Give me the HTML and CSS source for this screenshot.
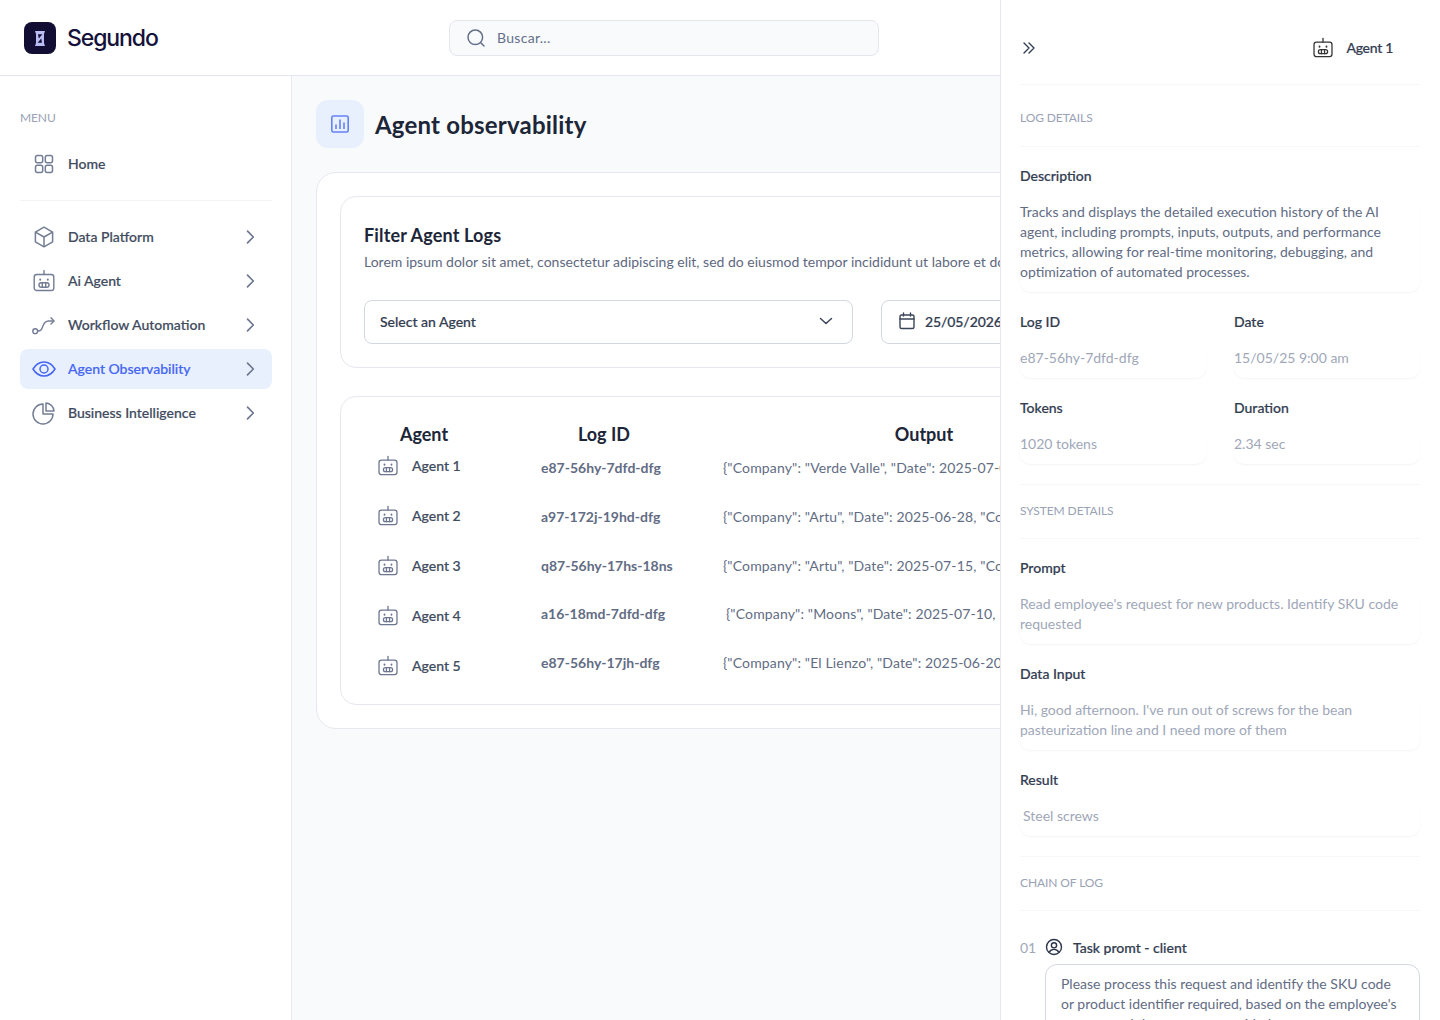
FILE: index.html
```html
<!DOCTYPE html>
<html lang="en">
<head>
<meta charset="utf-8">
<title>Segundo - Agent observability</title>
<link rel="stylesheet" href="styles.css">
</head>
<body>
<svg class="defs" width="0" height="0">
  <symbol id="robot" viewBox="0 0 24 24" fill="none" stroke="currentColor" stroke-width="1.4" stroke-linecap="round" stroke-linejoin="round">
    <rect x="2.2" y="5.5" width="19.6" height="16" rx="2.6"/>
    <path d="M12 5.5V1.6"/>
    <rect x="7" y="13.8" width="10" height="4.4" rx="2.2"/>
    <path d="M10.3 13.8v4.4M13.7 13.8v4.4"/>
    <path d="M8.2 10.4v.3M15.8 10.4v.3" stroke-width="2"/>
  </symbol>
  <symbol id="chev" viewBox="0 0 24 24" fill="none" stroke="currentColor" stroke-width="2" stroke-linecap="round" stroke-linejoin="round">
    <path d="M9 5l7 7-7 7"/>
  </symbol>
</svg>

<div class="app">
  <div class="left">
    <header class="topbar">
      <div class="brand">
        <span class="logo">
          <svg width="12" height="15" viewBox="0 0 12 15">
            <path d="M1 0h10l-1 3v9l1 3H1l1-3V3z" fill="#b9bdf3"/>
            <path d="M4 3.2h4.4L4.800 7.500zM8 11.800H3.600L7.200 7.500z" fill="#120e33"/>
          </svg>
        </span>
        <span class="brand-name">Segundo</span>
      </div>
      <div class="search">
        <svg width="20" height="20" viewBox="0 0 20 20" fill="none" stroke="#64708a" stroke-width="1.5" stroke-linecap="round"><circle cx="9.3" cy="9.3" r="7.3"/><path d="M15 15l3 3"/></svg>
        <span>Buscar...</span>
      </div>
    </header>

    <div class="body">
      <nav class="sidebar">
        <div class="menu-label">MENU</div>
        <a class="nav-item first">
          <svg class="nav-icon" viewBox="0 0 24 24" fill="none" stroke="currentColor" stroke-width="1.5"><rect x="3.5" y="3.5" width="7.2" height="7.2" rx="2"/><rect x="13.3" y="3.5" width="7.2" height="7.2" rx="2"/><rect x="3.5" y="13.3" width="7.2" height="7.2" rx="2"/><rect x="13.3" y="13.3" width="7.2" height="7.2" rx="2"/></svg>
          <span>Home</span>
        </a>
        <div class="nav-rule"></div>
        <a class="nav-item">
          <svg class="nav-icon" viewBox="0 0 24 24" fill="none" stroke="currentColor" stroke-width="1.5" stroke-linejoin="round"><path d="M12 2.2l8.6 4.9v9.8L12 21.8l-8.6-4.9V7.1z"/><path d="M3.4 7.1L12 12l8.6-4.9M12 12v9.8"/></svg>
          <span>Data Platform</span>
          <svg class="chev"><use href="#chev"/></svg>
        </a>
        <a class="nav-item">
          <svg class="nav-icon"><use href="#robot"/></svg>
          <span>Ai Agent</span>
          <svg class="chev"><use href="#chev"/></svg>
        </a>
        <a class="nav-item">
          <svg class="nav-icon" viewBox="0 0 24 24" fill="none" stroke="currentColor" stroke-width="1.4" stroke-linecap="round" stroke-linejoin="round"><circle cx="3.2" cy="18.2" r="2.4"/><path d="M5.6 18c3.5 0 4-1.2 5-4.2 1-3 3-5.800 6-5.800h5"/><path d="M19 4.800l3 3.200-3 3"/></svg>
          <span>Workflow Automation</span>
          <svg class="chev"><use href="#chev"/></svg>
        </a>
        <a class="nav-item active">
          <svg class="nav-icon" viewBox="0 0 24 24" fill="none" stroke="currentColor" stroke-width="1.5"><path d="M1 12c2.8-4.600 6.400-7 11-7s8.200 2.400 11 7c-2.800 4.600-6.400 7-11 7s-8.200-2.400-11-7z"/><circle cx="12" cy="12" r="4"/></svg>
          <span>Agent Observability</span>
          <svg class="chev"><use href="#chev"/></svg>
        </a>
        <a class="nav-item">
          <svg class="nav-icon" viewBox="0 0 24 24" fill="none" stroke="currentColor" stroke-width="1.5" stroke-linejoin="round"><path d="M11 3a10 10 0 1 0 10 10H11z"/><path d="M14 2a8.500 8.500 0 0 1 8 8h-8z"/></svg>
          <span>Business Intelligence</span>
          <svg class="chev"><use href="#chev"/></svg>
        </a>
      </nav>

      <main class="main">
        <div class="page-title">
          <span class="title-icon">
            <svg width="20" height="20" viewBox="0 0 20 20" fill="none" stroke="#6680f5" stroke-width="1.6"><rect x="1.8" y="2" width="16.4" height="16" rx="1.6"/><path d="M6 10.500V15M10 5.500V15M14 8.500V15"/></svg>
          </span>
          <h1>Agent observability</h1>
        </div>

        <section class="outer-card">
          <div class="filter-card">
            <h2>Filter Agent Logs</h2>
            <p class="filter-sub">Lorem ipsum dolor sit amet, consectetur adipiscing elit, sed do eiusmod tempor incididunt ut labore et dolore magna aliqua.</p>
            <div class="filter-row">
              <div class="select">
                <span>Select an Agent</span>
                <svg width="16" height="16" viewBox="0 0 16 16" fill="none" stroke="#3b4559" stroke-width="1.5" stroke-linecap="round" stroke-linejoin="round"><path d="M2.500 5.500L8 10.500l5.500-5"/></svg>
              </div>
              <div class="date">
                <svg width="18" height="18" viewBox="0 0 18 18" fill="none" stroke="#3b4559" stroke-width="1.4" stroke-linecap="round"><rect x="2" y="3" width="14" height="13.5" rx="1.5"/><path d="M2 7h14M5.500 1v3M12.500 1v3"/></svg>
                <span>25/05/2026</span>
              </div>
            </div>
          </div>

          <div class="table-card">
            <div class="col col-agent">
              <div class="col-head">Agent</div>
              <div class="agent-row"><svg class="robot"><use href="#robot"/></svg><span>Agent 1</span></div>
              <div class="agent-row"><svg class="robot"><use href="#robot"/></svg><span>Agent 2</span></div>
              <div class="agent-row"><svg class="robot"><use href="#robot"/></svg><span>Agent 3</span></div>
              <div class="agent-row"><svg class="robot"><use href="#robot"/></svg><span>Agent 4</span></div>
              <div class="agent-row"><svg class="robot"><use href="#robot"/></svg><span>Agent 5</span></div>
            </div>
            <div class="col col-log">
              <div class="col-head">Log ID</div>
              <div class="cell log-id">e87-56hy-7dfd-dfg</div>
              <div class="cell log-id">a97-172j-19hd-dfg</div>
              <div class="cell log-id">q87-56hy-17hs-18ns</div>
              <div class="cell log-id">a16-18md-7dfd-dfg</div>
              <div class="cell log-id">e87-56hy-17jh-dfg</div>
            </div>
            <div class="col col-output">
              <div class="col-head">Output</div>
              <div class="cell output">{"Company": "Verde Valle", "Date": 2025-07-02, "Cost": 1200}</div>
              <div class="cell output">{"Company": "Artu", "Date": 2025-06-28, "Cost": 870}</div>
              <div class="cell output">{"Company": "Artu", "Date": 2025-07-15, "Cost": 640}</div>
              <div class="cell output shifted">{"Company": "Moons", "Date": 2025-07-10, "Cost": 310}</div>
              <div class="cell output">{"Company": "El Lienzo", "Date": 2025-06-20, "Cost": 990}</div>
            </div>
          </div>
        </section>
      </main>
    </div>
  </div>

  <aside class="panel">
    <div class="panel-top">
      <svg class="collapse" width="14" height="14" viewBox="0 0 14 14" fill="none" stroke="#333d52" stroke-width="1.4" stroke-linecap="round" stroke-linejoin="round"><path d="M2 2l5 5-5 5M7 2l5 5-5 5"/></svg>
      <div class="panel-agent"><svg class="robot dark"><use href="#robot"/></svg><span>Agent 1</span></div>
    </div>
    <div class="sec-head first">LOG DETAILS</div>

    <div class="field">
      <div class="label">Description</div>
      <div class="value dark-value">Tracks and displays the detailed execution history of the AI agent, including prompts, inputs, outputs, and performance metrics, allowing for real-time monitoring, debugging, and optimization of automated processes.</div>
    </div>
    <div class="field-grid">
      <div class="field"><div class="label">Log ID</div><div class="value">e87-56hy-7dfd-dfg</div></div>
      <div class="field"><div class="label">Date</div><div class="value">15/05/25 9:00 am</div></div>
      <div class="field"><div class="label">Tokens</div><div class="value">1020 tokens</div></div>
      <div class="field"><div class="label">Duration</div><div class="value">2.34 sec</div></div>
    </div>

    <div class="sec-head">SYSTEM DETAILS</div>
    <div class="field">
      <div class="label">Prompt</div>
      <div class="value">Read employee's request for new products. Identify SKU code requested</div>
    </div>
    <div class="field">
      <div class="label">Data Input</div>
      <div class="value">Hi, good afternoon. I've run out of screws for the bean pasteurization line and I need more of them</div>
    </div>
    <div class="field">
      <div class="label">Result</div>
      <div class="value indent">Steel screws</div>
    </div>

    <div class="sec-head">CHAIN OF LOG</div>
    <div class="chain-head">
      <span class="chain-num">01</span>
      <svg width="18" height="18" viewBox="0 0 18 18" fill="none" stroke="#2b3448" stroke-width="1.4"><circle cx="9" cy="9" r="7.5"/><circle cx="9" cy="7.3" r="2.6"/><path d="M4.200 14.300c1-2 2.700-2.900 4.800-2.900s3.800.900 4.800 2.900"/></svg>
      <span class="chain-title">Task promt - client</span>
    </div>
    <div class="chain-box">Please process this request and identify the SKU code or product identifier required, based on the employee's request and the message provided.</div>
  </aside>
</div>
</body>
</html>
```

FILE: styles.css
```css
* {
	box-sizing: border-box;
}
html, body {
	margin: 0;
	height: 100%;
}
body {
	font-family: "Lato", "Liberation Sans", sans-serif;
	font-size: 14px;
	color: #333d52;
	background: #fff;
	overflow: hidden;
}
h1, h2, p {
	margin: 0;
}
.defs {
	position: absolute;
}
.app {
	display: flex;
	width: 1440px;
	height: 1020px;
	overflow: hidden;
}
.left {
	width: 1000px;
	flex: none;
	display: flex;
	flex-direction: column;
	overflow: hidden;
}

/* top bar */
.topbar {
	height: 76px;
	flex: none;
	display: flex;
	align-items: flex-start;
	border-bottom: 1px solid #e4e6ee;
	background: #fff;
}
.brand {
	width: 449px;
	flex: none;
	display: flex;
	align-items: center;
	gap: 11px;
	padding: 22px 0 0 24px;
}
.logo {
	width: 32px;
	height: 32px;
	border-radius: 8px;
	background: #120e33;
	display: flex;
	align-items: center;
	justify-content: center;
}
.brand-name {
	font-family: "Inter", sans-serif;
	font-size: 23px;
	font-weight: 500;
	letter-spacing: -1.1px;
	color: #14113a;
}
.search {
	width: 430px;
	height: 36px;
	margin-top: 20px;
	display: flex;
	align-items: center;
	gap: 11px;
	padding: 0 0 1px 16px;
	background: #f9fafc;
	border: 1px solid #e4e6ee;
	border-radius: 8px;
	color: #64708a;
	letter-spacing: .3px;
}
.body {
	flex: 1;
	display: flex;
	min-height: 0;
}

/* sidebar */
.sidebar {
	width: 292px;
	flex: none;
	padding: 34px 19px 0 20px;
	border-right: 1px solid #e8e9f1;
	background: #fff;
}
.menu-label {
	font-size: 12px;
	line-height: 16px;
	letter-spacing: -.1px;
	color: #9aa2b6;
	margin-bottom: 18px;
}
.nav-item {
	height: 40px;
	margin-bottom: 4px;
	display: flex;
	align-items: center;
	padding: 0 12px;
	border-radius: 8px;
	font-size: 14px;
	font-weight: 500;
	color: #414b60;
	-webkit-text-stroke: .2px;
}
.nav-item.first {
	margin-bottom: 16px;
}
.nav-item span {
	flex: 1;
	padding-bottom: 2px;
}
.nav-icon {
	width: 24px;
	height: 24px;
	margin-right: 12px;
	color: #737d94;
	flex: none;
}
.chev {
	width: 20px;
	height: 20px;
	color: #6c768e;
}
.nav-rule {
	height: 1px;
	background: #f2f3f6;
	margin-bottom: 16px;
}
.nav-item.active {
	background: #e9f0fd;
	color: #4565f3;
}
.nav-item.active .nav-icon {
	color: #4565f3;
}

/* main */
.main {
	flex: 1;
	min-width: 0;
	background: #f9fafc;
	padding: 24px 0 0 24px;
}
.page-title {
	display: flex;
	align-items: center;
	gap: 11px;
	margin-bottom: 24px;
}
.title-icon {
	width: 48px;
	height: 48px;
	border-radius: 12px;
	background: #e9f0fd;
	display: flex;
	align-items: center;
	justify-content: center;
}
h1 {
	font-size: 24px;
	font-weight: 700;
	letter-spacing: .2px;
	color: #1c2638;
}
.outer-card {
	width: 900px;
	height: 557px;
	padding: 23px;
	background: #fff;
	border: 1px solid #e6e8ef;
	border-radius: 20px;
}
.filter-card {
	height: 172px;
	padding: 28px 23px 0;
	border: 1px solid #e6e8ef;
	border-radius: 16px;
	margin-bottom: 28px;
}
h2 {
	font-size: 18px;
	line-height: 20px;
	font-weight: 700;
	letter-spacing: .15px;
	color: #1c2638;
	margin-bottom: 7px;
}
.filter-sub {
	font-size: 14px;
	line-height: 20px;
	color: #5e6880;
	white-space: nowrap;
	margin-bottom: 28px;
}
.filter-row {
	display: flex;
	gap: 28px;
}
.select {
	width: 489px;
	height: 44px;
	display: flex;
	align-items: center;
	justify-content: space-between;
	padding: 0 18px 2px 15px;
	border: 1px solid #d3d7e2;
	border-radius: 8px;
	color: #333d52;
	font-weight: 500;
	-webkit-text-stroke: .2px;
}
.date {
	width: 260px;
	height: 44px;
	display: flex;
	align-items: center;
	gap: 9px;
	padding: 0 0 2px 16px;
	border: 1px solid #d3d7e2;
	border-radius: 8px;
	color: #333d52;
	font-weight: 500;
	letter-spacing: -.1px;
	-webkit-text-stroke: .2px;
}

/* table */
.table-card {
	height: 309px;
	display: flex;
	padding: 25px 23px 0;
	border: 1px solid #e6e8ef;
	border-radius: 16px;
}
.col-head {
	font-size: 18px;
	line-height: 24px;
	font-weight: 700;
	color: #1c2638;
	text-align: center;
	margin-bottom: 12px;
}
.col-agent {
	width: 120px;
	flex: none;
}
.col-log {
	width: 176px;
	margin-left: 32px;
	flex: none;
}
.col-output {
	width: 402px;
	margin-left: 31px;
	flex: none;
}
.col-agent .col-head {
	margin-bottom: 10px;
}
.agent-row {
	height: 50px;
	display: flex;
	align-items: flex-start;
	gap: 13px;
	padding-left: 13px;
	font-weight: 500;
	color: #414b60;
	-webkit-text-stroke: .2px;
}
.agent-row span {
	line-height: 20px;
}
.agent-row .robot {
	margin-top: -1px;
}
.robot {
	width: 22px;
	height: 22px;
	color: #6c768e;
	flex: none;
}
.robot.dark {
	color: #333;
}
.cell {
	height: 48.8px;
	line-height: 20px;
	white-space: nowrap;
}
.log-id {
	padding-left: 25px;
	font-weight: 700;
	color: #626c84;
}
.output {
	letter-spacing: .15px;
	color: #626c84;
}
.shifted {
	padding-left: 3px;
}

/* right panel */
.panel {
	width: 440px;
	flex: none;
	padding: 0 20px 0 19px;
	background: #fff;
	border-left: 1px solid #e4e6f0;
}
.panel-top {
	height: 85px;
	display: flex;
	align-items: center;
	justify-content: space-between;
	padding: 11px 27px 0 2px;
	border-bottom: 1px solid #f6f7f9;
}
.panel-agent {
	display: flex;
	align-items: center;
	gap: 12px;
	font-weight: 500;
	letter-spacing: -.3px;
	color: #333d52;
	-webkit-text-stroke: .2px;
}
.sec-head {
	height: 55px;
	margin-top: 20px;
	padding-bottom: 2px;
	display: flex;
	align-items: center;
	font-size: 12px;
	letter-spacing: -.1px;
	color: #9aa2b6;
	border-top: 1px solid #f6f7f9;
	border-bottom: 1px solid #f6f7f9;
}
.sec-head.first {
	height: 62px;
	margin-top: 0;
	padding: 4px 0 0;
	border-top: 0;
}
.field {
	margin-top: 20px;
}
.sec-head + .field {
	margin-top: 19px;
}
.label {
	line-height: 20px;
	font-weight: 500;
	color: #333d52;
	margin-bottom: 16px;
	-webkit-text-stroke: .2px;
}
.value {
	line-height: 20px;
	padding-bottom: 10px;
	color: #a0a7b9;
	border-radius: 10px;
	box-shadow: 0 1px 2px rgba(30, 40, 70, .05);
}
.value.dark-value {
	padding-right: 15px;
	color: #626c84;
}
.value.indent {
	padding-left: 3px;
}
.field-grid {
	display: grid;
	grid-template-columns: 186px 186px;
	column-gap: 28px;
}
.chain-head {
	display: flex;
	align-items: center;
	margin-top: 27px;
	padding-bottom: 2px;
	height: 20px;
}
.chain-num {
	width: 25px;
	color: #a0a7b9;
}
.chain-title {
	margin-left: 10px;
	font-weight: 500;
	color: #333d52;
	-webkit-text-stroke: .2px;
}
.chain-box {
	margin: 6px 0 0 25px;
	padding: 9px 15px;
	line-height: 20px;
	color: #626c84;
	border: 1px solid #d3d7e2;
	border-radius: 12px;
}
```
